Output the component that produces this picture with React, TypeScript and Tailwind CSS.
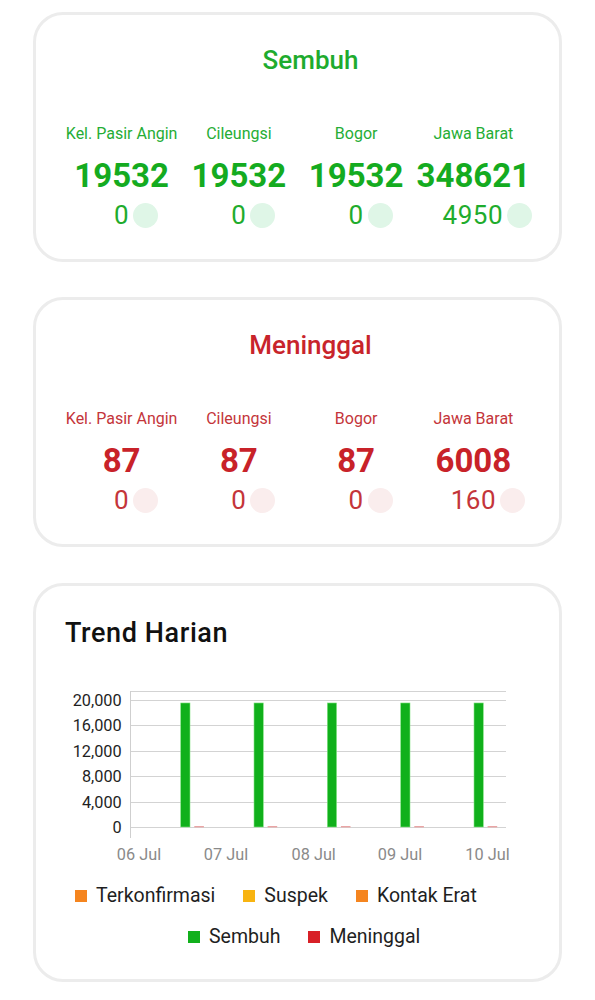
import React from "react";

type Stat = { label: string; value: string; delta: string };

const regions = ["Kel. Pasir Angin", "Cileungsi", "Bogor", "Jawa Barat"];

const sembuh: Stat[] = [
  { label: regions[0], value: "19532", delta: "0" },
  { label: regions[1], value: "19532", delta: "0" },
  { label: regions[2], value: "19532", delta: "0" },
  { label: regions[3], value: "348621", delta: "4950" },
];

const meninggal: Stat[] = [
  { label: regions[0], value: "87", delta: "0" },
  { label: regions[1], value: "87", delta: "0" },
  { label: regions[2], value: "87", delta: "0" },
  { label: regions[3], value: "6008", delta: "160" },
];

const tones = {
  green: {
    title: "text-[#1eab2e]",
    label: "text-[#25ad35]",
    value: "text-[#14ab20]",
    delta: "text-[#1fac2d]",
    dot: "bg-[#dff6e7]",
  },
  red: {
    title: "text-[#c8242b]",
    label: "text-[#c4353a]",
    value: "text-[#c82229]",
    delta: "text-[#c4353a]",
    dot: "bg-[#faeded]",
  },
};

function StatCard({ title, tone, stats }: { title: string; tone: keyof typeof tones; stats: Stat[] }) {
  const t = tones[tone];
  return (
    <div className="rounded-[30px] border-[3px] border-[#ececec] bg-white pt-[30px] pb-[29px]">
      <h2 className={`pl-[26px] text-center text-[26px] font-medium leading-[30px] ${t.title}`}>{title}</h2>
      <div className="mt-[49px] grid grid-cols-4 px-[27px]">
        {stats.map((s) => (
          <div key={s.label} className="flex min-w-0 flex-col items-center overflow-hidden">
            <p className={`whitespace-nowrap text-[16px] leading-[20px] ${t.label}`}>{s.label}</p>
            <p className={`mt-[13px] text-[33px] font-bold leading-[38px] ${t.value}`}>{s.value}</p>
            <div className="mt-[5px] grid w-full grid-cols-[1fr_auto_1fr] items-center">
              <span className={`col-start-2 text-[26px] leading-[30px] tracking-[0.5px] ${t.delta}`}>{s.delta}</span>
              <span className={`ml-[4px] h-[25px] w-[25px] shrink-0 rounded-full ${t.dot}`} />
            </div>
          </div>
        ))}
      </div>
    </div>
  );
}

const gridLines = [19.5, 44.5, 70.5, 95.5, 121.5, 146.5];
const yTicks = ["20,000", "16,000", "12,000", "8,000", "4,000", "0"];
const dates = [
  { x: 89, t: "06 Jul" },
  { x: 176, t: "07 Jul" },
  { x: 263.7, t: "08 Jul" },
  { x: 350, t: "09 Jul" },
  { x: 437.5, t: "10 Jul" },
];
const barX = [130.7, 204, 277.3, 350.7, 424];

function TrendChart() {
  const top = 146 - (19532 / 20000) * 127;
  return (
    <svg width="470" height="190" viewBox="0 0 470 190" className="ml-[14px] mt-[32px] block" style={{ fontFamily: "Roboto, sans-serif" }}>
      <line x1="80.5" x2="456" y1="10.5" y2="10.5" stroke="#d3d3d3" />
      {gridLines.map((y, i) => (
        <g key={y}>
          <line x1="80.5" x2="456" y1={y} y2={y} stroke="#d3d3d3" />
          <text x="71.7" y={y + 5.5} textAnchor="end" fontSize="16.3" fill="#1f1f1f">
            {yTicks[i]}
          </text>
        </g>
      ))}
      <line x1="80.5" x2="80.5" y1="10" y2="157" stroke="#cfcfcf" />
      {barX.map((x) => (
        <g key={x}>
          <rect x={x} y={top} width="9.3" height={146 - top} fill="#10b01b" stroke="#86e486" strokeWidth="0.6" />
          <rect x={x + 13.6} y="145" width="9.6" height="1.4" fill="#eaa5a5" />
        </g>
      ))}
      {dates.map((d) => (
        <text key={d.t} x={d.x} y="179" textAnchor="middle" fontSize="16.3" fill="#8a8a8a">
          {d.t}
        </text>
      ))}
    </svg>
  );
}

function LegendItem({ color, label }: { color: string; label: string }) {
  return (
    <div className="flex items-center gap-[9px]">
      <span className={`h-[12px] w-[12px] ${color}`} />
      <span className="text-[19.5px] leading-[24px] text-[#1f1f1f]">{label}</span>
    </div>
  );
}

export default function App() {
  return (
    <main className="min-h-screen w-[595px] bg-white px-[33px] pt-[12px] pb-[20px]" style={{ fontFamily: "Roboto, 'Noto Sans', sans-serif" }}>
      <StatCard title="Sembuh" tone="green" stats={sembuh} />
      <div className="mt-[35px]">
        <StatCard title="Meninggal" tone="red" stats={meninggal} />
      </div>
      <section className="mt-[36px] rounded-[30px] border-[3px] border-[#ececec] bg-white pt-[31px] pb-[30px]">
        <h2 className="pl-[29px] text-[27px] font-medium leading-[32px] tracking-[0.6px] text-[#111]">Trend Harian</h2>
        <TrendChart />
        <div className="mt-[13px] flex flex-col gap-[17px]">
          <div className="ml-[39px] flex gap-[28px]">
            <LegendItem color="bg-[#f5851f]" label="Terkonfirmasi" />
            <LegendItem color="bg-[#f8b411]" label="Suspek" />
            <LegendItem color="bg-[#f5851f]" label="Kontak Erat" />
          </div>
          <div className="ml-[152px] flex gap-[28px]">
            <LegendItem color="bg-[#12b01c]" label="Sembuh" />
            <LegendItem color="bg-[#d82027]" label="Meninggal" />
          </div>
        </div>
      </section>
    </main>
  );
}
